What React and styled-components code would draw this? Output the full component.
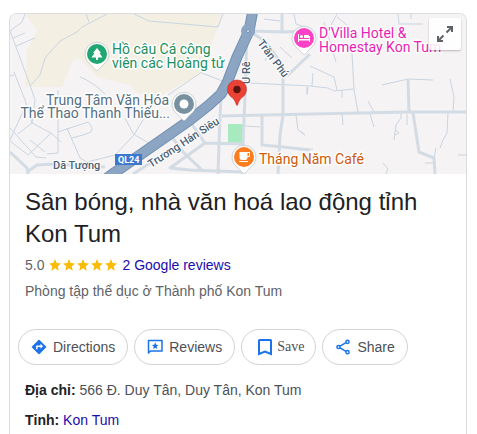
import React from "react";
import styled, { createGlobalStyle } from "styled-components";

const GlobalStyle = createGlobalStyle`
  body {
    margin: 0;
    background: #fff;
    font-family: "Liberation Sans", Arial, sans-serif;
    font-size: 14px;
    color: #4d5156;
  }
`;

const Page = styled.div`
  box-sizing: border-box;
  display: flex;
  flex-direction: column;
  min-height: 100vh;
  padding: 13px 10px 0 9px;
`;

const Card = styled.main`
  flex: 1;
  border: 1px solid #dadce0;
  border-bottom: 0;
  border-radius: 8px 8px 0 0;
  overflow: hidden;
`;

const MapBox = styled.div`
  position: relative;
  height: 160px;
  background: #f5f3f4;
`;

const MapSvg = styled.svg`
  display: block;
  width: 100%;
  height: 100%;
`;

const ExpandButton = styled.button`
  position: absolute;
  top: 4px;
  right: 5px;
  display: flex;
  align-items: center;
  justify-content: center;
  width: 32px;
  height: 32px;
  padding: 0;
  border: 0;
  border-radius: 2px;
  background: rgba(255, 255, 255, 0.85);
  box-shadow: 0 1px 2px rgba(0, 0, 0, 0.25);
  cursor: pointer;
`;

const Header = styled.header`
  padding: 12px 15px 0;
`;

const Title = styled.h1`
  margin: 0 0 2px;
  font-size: 24px;
  font-weight: 400;
  line-height: 32px;
  color: #202124;
`;

const Line = styled.div`
  display: flex;
  align-items: center;
  line-height: 26px;
  color: #5f6368;
`;

const Stars = styled.span`
  display: flex;
  gap: 2px;
  margin: 0 5px;
`;

const Link = styled.a`
  color: #1a0dab;
  text-decoration: none;
`;

const Actions = styled.div`
  display: flex;
  flex-wrap: wrap;
  gap: 6px;
  padding: 25px 8px 15px;
`;

const ActionButton = styled.button`
  display: flex;
  align-items: center;
  gap: ${props => (props.$serif ? "0" : "6px")};
  height: 36px;
  padding: 0 ${props => (props.$serif ? "11px" : "12px")};
  border: 1px solid #d2d2d2;
  border-radius: 18px;
  background: #fff;
  color: #4d5156;
  font-family: ${props =>
    props.$serif
      ? '"Liberation Serif", "Times New Roman", serif'
      : '"Liberation Sans", Arial, sans-serif'};
  font-size: 14px;
  cursor: pointer;
`;

const Facts = styled.div`
  display: flex;
  flex-direction: column;
  gap: 10px;
  padding: 0 15px;
  line-height: 20px;
`;

const Label = styled.span`
  font-weight: 700;
  color: #202124;
`;

const MapLabel = styled.text`
  font-family: Roboto, "Noto Sans", sans-serif;
  font-size: ${props => (props.$street ? "11px" : "14px")};
  font-weight: ${props => (props.$street ? 500 : 400)};
  fill: ${props => props.$color || "#4b5f75"};
  stroke: #fff;
  stroke-width: ${props => (props.$street ? "2px" : "3px")};
  stroke-linejoin: round;
  paint-order: stroke;
`;

const Shield = styled.text`
  font-family: Roboto, "Noto Sans", sans-serif;
  font-size: 9px;
  font-weight: 700;
  fill: #fff;
`;

const green = "#1a8f5f";
const pink = "#e91eb4";
const orange = "#d0590a";
const slate = "#557080";

const thinRoads = [
  "M25 14L22 22L10 31L16 47L30 85L35 100",
  "M13 38L25 33M16 46L35 38M10 76L14 75M14 72L25 100L32 123",
  "M30 86L40 75L45 58L60 41L77 32L82 27L107 14M86 14L89 22",
  "M134 14L149 21L218 27L223 14",
  "M80 77Q93 82 105 94M168 95L193 78L205 70M202 73L225 82",
  "M337 14L325 36M337 17L347 25M324 22L336 62",
  "M398 14L399 24L423 24M411 14V19",
  "M352 53L354 90L358 112M310 66L334 77L337 90",
  "M250 83L310 86L328 88L334 91L354 89M313 73L312 86M307 87V94M342 90V98",
  "M382 85L408 79L433 80M450 79L454 97L453 112",
  "M368 101L374 112M342 113L343 125M370 114L374 127",
  "M401 114V118L396 125L394 140M396 130L399 133L395 135M407 114V125",
  "M448 113L447 133L443 140L440 148M425 163H434M458 155H466M436 148L434 158",
  "M383 163L388 169L386 174M300 131L305 135M300 150L313 149",
  "M35 100L32 123L51 133L61 142M25 107L10 140M10 128L36 157L46 158M32 123L18 134M51 133L28 155L10 141M30 140L45 152",
  "M58 90V153L47 154M58 132L88 122Q94 128 91 132L83 135L72 138M67 128L80 158L87 162L115 155L134 135L125 118",
  "M134 135L147 113M135 135L152 145",
  "M296 115L298 130L305 135M245 126L260 127M264 19L280 21M294 14L296 24L307 28",
  "M280 47L292 58M268 54L265 61M308 87L307 95",
];

const wideRoads = [
  "M252 31L283 32L310 31M282 14V32",
  "M250 31L267 43L283 66L283 115L280 135L278 174M287 76L310 54",
  "M247 33L245 97L243 144L242 174",
  "M222 116L310 114L410 112L466 112",
  "M221 95L219 143L218 174",
  "M191 123L205 143L243 144M205 143L170 168L190 170L243 172",
  "M172 137L183 152L202 170",
  "M262 115V145L283 147L310 150",
  "M408 79L409 112M413 113L419 152L434 158L435 174",
  "M10 152L27 168L28 174M27 172L37 165L55 164L105 167",
  "M133 174L160 157",
];

const highway = "M253 10L249 31L237 57L227 83L221 94L209 105L190 120L160 141L114 173L106 179";

const Pin = ({ x, y, color, children }) => (
  <g transform={`translate(${x} ${y})`}>
    <path
      d="M0 16.500C-2 16.500-3 13-7 10A12 12 0 1 1 7 10C3 13 2 16.500 0 16.500Z"
      fill="#fff"
      stroke="#b9bec4"
      strokeWidth="0.700"
    />
    <circle r="10" fill={color} />
    {children}
  </g>
);

const AreaMap = () => (
  <MapSvg viewBox="10 14 456 160" preserveAspectRatio="xMidYMid slice" role="img" aria-label="Kon Tum">
    <path
      d="M25 14L37 30L27 50L25 87L62 87L73 61Q78 55 84 63L97 77L130 85L137 93L160 96L203 72L213 40L223 14Z"
      fill="#f4efe3"
    />
    <rect x="228" y="124" width="16" height="20" fill="#a8eac0" />
    <g fill="none" stroke="#c9d5e1" strokeLinejoin="round">
      {thinRoads.map(d => (
        <path key={d} d={d} />
      ))}
    </g>
    <g fill="none" stroke="#d3dce4" strokeWidth="3" strokeLinejoin="round">
      {wideRoads.map(d => (
        <path key={d} d={d} />
      ))}
    </g>
    <path d={highway} fill="none" stroke="#7290b2" strokeWidth="11" strokeLinejoin="round" />
    <path d={highway} fill="none" stroke="#8ba5c3" strokeWidth="9" strokeLinejoin="round" />
    <circle cx="248" cy="31" r="7" fill="#8ba5c3" />
    <circle cx="248" cy="31" r="1.500" fill="#e6ebf1" stroke="#7290b2" />

    <rect x="115" y="154" width="27" height="11" fill="#3c78cf" />
    <Shield x="118" y="163">QL24</Shield>

    <MapLabel $street x="53" y="169">Dã Tượng</MapLabel>
    <MapLabel $street transform="translate(151 168) rotate(-33)">Trương Hán Siêu</MapLabel>
    <MapLabel $street transform="translate(257 43) rotate(53)">Trần Phú</MapLabel>
    <MapLabel $street transform="translate(250 84) rotate(-90)">U Rê</MapLabel>

    <MapLabel $color={green} x="112" y="54">Hồ câu Cá công</MapLabel>
    <MapLabel $color={green} x="112" y="68">viên các Hoàng tử</MapLabel>
    <MapLabel $color={slate} x="169" y="105" textAnchor="end">Trung Tâm Văn Hóa</MapLabel>
    <MapLabel $color={slate} x="170" y="118" textAnchor="end">Thể Thao Thanh Thiếu...</MapLabel>
    <MapLabel $color={pink} x="319" y="38">D'Villa Hotel &amp;</MapLabel>
    <MapLabel $color={pink} x="319" y="52">Homestay Kon Tum</MapLabel>
    <MapLabel $color={orange} x="259" y="164">Tháng Năm Café</MapLabel>

    <Pin x="97" y="54" color="#1fa672">
      <path d="M0-6L4-1H2.500L5.500 3.500H1V6H-1V3.500H-5.500L-2.500-1H-4Z" fill="#fff" />
    </Pin>
    <Pin x="184" y="104" color="#7890a0">
      <circle r="4.500" fill="#fff" />
    </Pin>
    <Pin x="304" y="38" color="#fb41c5">
      <path d="M-6-4H-5V1H5V-2H6V4H5V2.500H-5V4H-6ZM0-3H4Q5-3 5-2V0H0Z" fill="#fff" />
      <circle cx="-2.500" cy="-1.500" r="1.500" fill="#fff" />
    </Pin>
    <Pin x="244" y="157" color="#fc7d20">
      <path d="M-4.500-5H6V-1Q6 0 5 0H3.500Q3.500 3 1 3H-2Q-4.500 3-4.500 0ZM3.500-4V-1H5V-4ZM-5 4H4V5H-5Z" fill="#fff" fillRule="evenodd" />
    </Pin>
    <path
      d="M237 105.500C236 105.500 236 101 232 97.500A9.500 9.500 0 1 1 242 97.500C238 101 238 105.500 237 105.500Z"
      fill="#ea4335"
      stroke="#c5221f"
      strokeWidth="0.500"
    />
    <circle cx="237" cy="89.500" r="3.700" fill="#5b1410" />
  </MapSvg>
);

const Star = () => (
  <svg width="12" height="12" viewBox="1 1 22 22" fill="#fabb05" aria-hidden="true">
    <path d="M12 18.100L18.800 22.500L17 14.500L23 9.200L15 8.500L12 1L9 8.500L1 9.200L7 14.500L5.200 22.500Z" />
  </svg>
);

const ExpandIcon = () => (
  <svg width="18" height="18" viewBox="0 0 18 18" fill="none" stroke="#5f6368" strokeWidth="2" aria-hidden="true">
    <path d="M11 2H16V7M16 2L10.500 7.500M7 16H2V11M2 16L7.500 10.500" />
  </svg>
);

const DirectionsIcon = () => (
  <svg width="16" height="16" viewBox="1 1 22 22" fill="#1a73e8" aria-hidden="true">
    <path d="M21.710 11.290l-9-9a.996.996 0 0 0-1.410 0l-9 9a.996.996 0 0 0 0 1.410l9 9c.390.390 1.020.390 1.410 0l9-9a.996.996 0 0 0 0-1.410zM14 14.500V12h-4v3H8v-4c0-.550.450-1 1-1h5V7.500l3.500 3.500-3.500 3.500z" />
  </svg>
);

const ReviewsIcon = () => (
  <svg width="16" height="16" viewBox="0 0 16 16" aria-hidden="true">
    <path d="M1.500 14V1.500H15V12H3.500Z" fill="none" stroke="#1a73e8" strokeWidth="1.500" strokeLinejoin="round" />
    <path d="M8.200 3.300L9.200 5.800L11.600 6L9.700 7.600L10.300 10L8.200 8.700L6.100 10L6.700 7.600L4.800 6L7.200 5.800Z" fill="#1a73e8" />
  </svg>
);

const SaveIcon = () => (
  <svg width="24" height="24" viewBox="0 0 24 24" aria-hidden="true">
    <path d="M6 19V5.500Q6 5 6.500 5H17.500Q18 5 18 5.500V19L12 16.500Z" fill="none" stroke="#1a73e8" strokeWidth="2" />
  </svg>
);

const ShareIcon = () => (
  <svg width="16" height="16" viewBox="0 0 16 16" fill="none" stroke="#1a73e8" strokeWidth="1.500" aria-hidden="true">
    <path d="M5 7.200L11 3.600M5 8.800L11 12.400" />
    <circle cx="3.500" cy="8" r="1.600" />
    <circle cx="12.500" cy="2.800" r="1.600" />
    <circle cx="12.500" cy="13.200" r="1.600" />
  </svg>
);

const actions = [
  { label: "Directions", Icon: DirectionsIcon },
  { label: "Reviews", Icon: ReviewsIcon },
  { label: "Save", Icon: SaveIcon, serif: true },
  { label: "Share", Icon: ShareIcon },
];

export default function App() {
  return (
    <Page>
      <GlobalStyle />
      <Card>
        <MapBox>
          <AreaMap />
          <ExpandButton type="button" aria-label="Expand map">
            <ExpandIcon />
          </ExpandButton>
        </MapBox>
        <Header>
          <Title>Sân bóng, nhà văn hoá lao động tỉnh Kon Tum</Title>
          <Line>
            5.0
            <Stars>
              {[1, 2, 3, 4, 5].map(n => (
                <Star key={n} />
              ))}
            </Stars>
            <Link href="#reviews">2 Google reviews</Link>
          </Line>
          <Line>Phòng tập thể dục ở Thành phố Kon Tum</Line>
        </Header>
        <Actions>
          {actions.map(({ label, Icon, serif }) => (
            <ActionButton key={label} type="button" $serif={serif}>
              <Icon />
              {label}
            </ActionButton>
          ))}
        </Actions>
        <Facts>
          <div>
            <Label>Địa chỉ:</Label> 566 Đ. Duy Tân, Duy Tân, Kon Tum
          </div>
          <div>
            <Label>Tỉnh:</Label> <Link href="#kon-tum">Kon Tum</Link>
          </div>
        </Facts>
      </Card>
    </Page>
  );
}
